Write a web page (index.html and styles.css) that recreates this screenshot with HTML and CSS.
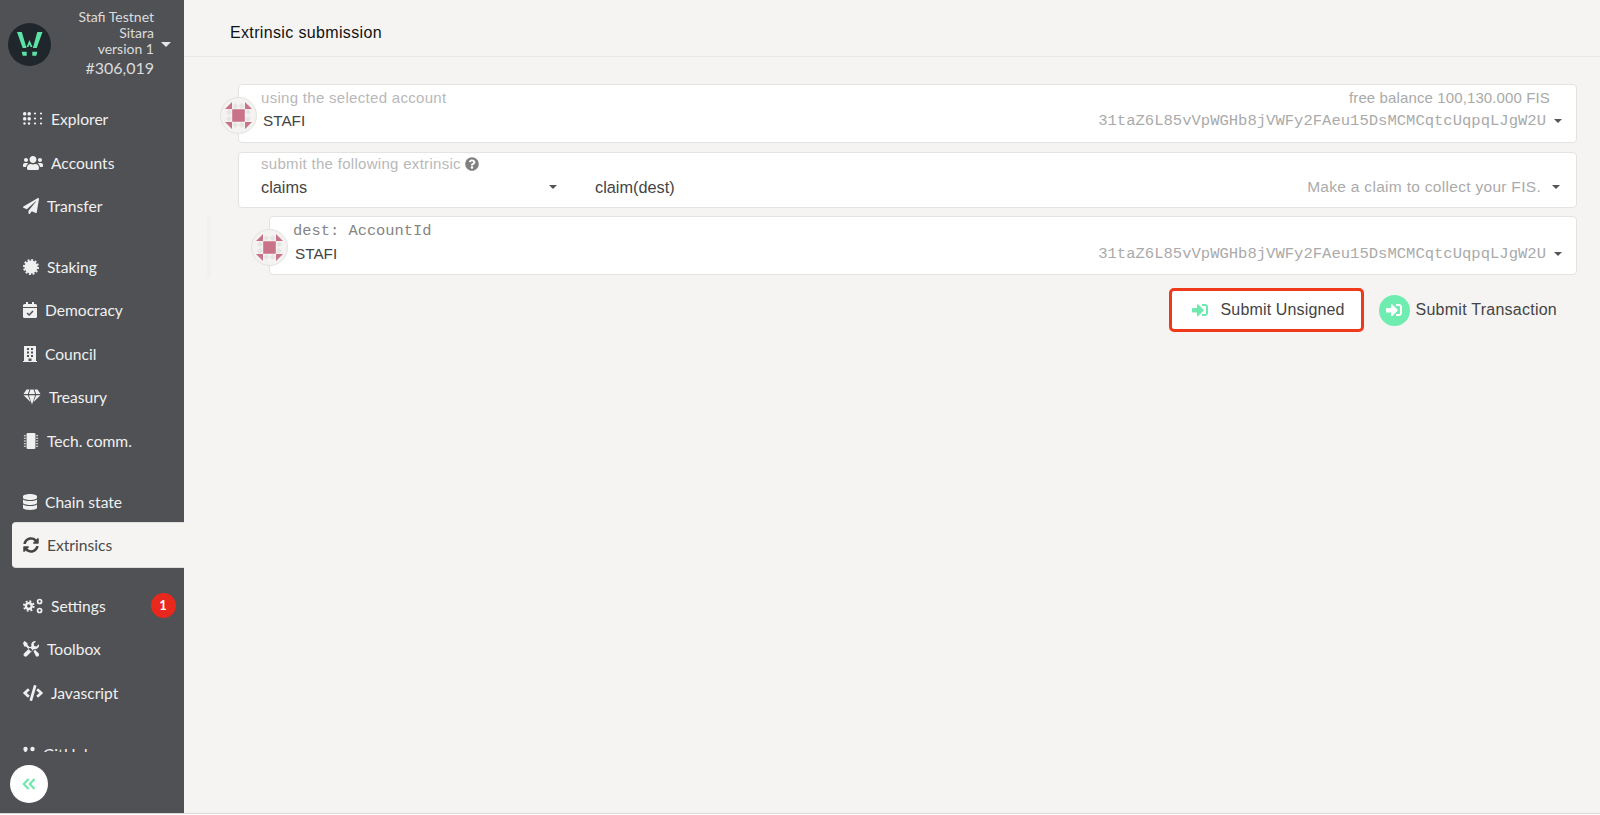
FILE: index.html
```html
<!DOCTYPE html>
<html lang="en">
<head>
<meta charset="utf-8">
<title>Extrinsic submission</title>
<link rel="stylesheet" href="styles.css">
</head>
<body>
<div class="app">
  <aside class="sidebar">
    <header class="chain">
      <svg class="logo" viewBox="0 0 43 43"><circle cx="21.5" cy="21.5" r="21.5" fill="#1f272c"/><path fill="#5de3a5" d="M9 9h4.800l4.700 16h-3.800zM29.300 9h5.200l-5.800 16h-3.800zM13.700 28.700h5v4h-4zM24.300 28.700h5l-1 4h-4zM21.500 17l3 7h-1.900l-1.100-2.500-1.100 2.500h-1.900z"/></svg>
      <div class="chain-info">
        <div>Stafi Testnet</div>
        <div>Sitara</div>
        <div>version 1</div>
        <div class="block">#306,019</div>
      </div>
      <span class="chain-caret"></span>
    </header>
    <nav class="nav">
      <a class="item"><svg class="ic w20" viewBox="0 0 20 14"><g fill="#f0f0f0"><rect x="0" y="0" width="3.400" height="3.400" rx="1.500"/><rect x="4.500" y="0" width="3.400" height="3.400" rx="1.500"/><rect x="0" y="5" width="3.400" height="3.400" rx="1.500"/><rect x="4.500" y="5" width="3.400" height="3.400" rx="1.500"/><circle cx="1.500" cy="11.500" r="1.200"/><circle cx="6" cy="11.500" r="1.200"/><circle cx="12" cy="1.500" r="1.100"/><circle cx="18" cy="1.500" r="1.100"/><circle cx="12" cy="6.500" r="1.100"/><circle cx="18" cy="6.500" r="1.100"/><circle cx="12" cy="11.500" r="1.100"/><circle cx="18" cy="11.500" r="1.100"/></g></svg><span>Explorer</span></a>
      <a class="item"><svg class="ic w20" viewBox="0 0 640 512"><path fill="#f0f0f0" d="M96 224c35.300 0 64-28.700 64-64s-28.700-64-64-64-64 28.700-64 64 28.700 64 64 64zm448 0c35.300 0 64-28.700 64-64s-28.700-64-64-64-64 28.700-64 64 28.700 64 64 64zm32 32h-64c-17.600 0-33.500 7.100-45.100 18.600 40.300 22.100 68.900 62 75.100 109.400h66c17.700 0 32-14.300 32-32v-32c0-35.300-28.700-64-64-64zm-256 0c61.900 0 112-50.100 112-112S381.900 32 320 32 208 82.100 208 144s50.100 112 112 112zm76.800 32h-8.300c-20.800 10-43.900 16-68.500 16s-47.600-6-68.500-16h-8.300C179.600 288 128 339.600 128 403.200V432c0 26.500 21.500 48 48 48h288c26.500 0 48-21.500 48-48v-28.800c0-63.600-51.600-115.200-115.200-115.200zm-223.700-13.400C161.500 263.100 145.600 256 128 256H64c-35.300 0-64 28.700-64 64v32c0 17.700 14.300 32 32 32h65.900c6.300-47.400 34.900-87.300 75.200-109.400z"/></svg><span>Accounts</span></a>
      <a class="item"><svg class="ic w16" viewBox="0 0 512 512"><path fill="#f0f0f0" d="M476 3.200L12.500 270.600c-18.100 10.400-15.800 35.600 2.200 43.200L121 358.400l287.300-253.200c5.500-4.900 13.300 2.600 8.600 8.300L176 407v80.500c0 23.600 28.500 32.900 42.500 15.800L282 426l124.600 52.200c14.200 6 30.400-2.900 33-18.200l72-432C515 7.800 493.300-6.800 476 3.200z"/></svg><span>Transfer</span></a>

      <a class="item gap"><svg class="ic w16" viewBox="0 0 16 16"><circle cx="8" cy="8" r="6.500" fill="#f0f0f0"/><circle cx="8" cy="8" r="7" fill="none" stroke="#f0f0f0" stroke-width="2" stroke-dasharray="2 1.660"/></svg><span>Staking</span></a>
      <a class="item"><svg class="ic w14" viewBox="0 0 14 16"><path fill="#f0f0f0" d="M3 0h2v2h4V0h2v2h1.500A1.500 1.500 0 0 1 14 3.500V5H0V3.500A1.500 1.500 0 0 1 1.500 2H3zM0 6h14v8.500a1.500 1.500 0 0 1-1.500 1.500h-11A1.500 1.500 0 0 1 0 14.500z"/><path fill="none" stroke="#4f5155" stroke-width="1.500" d="M4 11l2.200 2L10 9"/></svg><span>Democracy</span></a>
      <a class="item"><svg class="ic w14" viewBox="0 0 14 16"><path fill="#f0f0f0" d="M1 0h12v15h1v1H0v-1h1z"/><path fill="#4f5155" d="M4 2h2v2H4zM8 2h2v2H8zM4 5.500h2v2H4zM8 5.500h2v2H8zM4 9h2v2H4zM8 9h2v2H8zM5.500 12.500h3V15h-3z"/></svg><span>Council</span></a>
      <a class="item"><svg class="ic w18" viewBox="0 0 18 15"><path fill="#f0f0f0" d="M3.500 0h3L4.800 4.600H.5zM7.500 0h3l1.600 4.600H5.900zM11.500 0h3l3 4.600h-4.300zM.5 5.700h4.300l3 7zM5.900 5.700h6.200L9 15zM13.200 5.700h4.300l-7.300 7z"/></svg><span>Treasury</span></a>
      <a class="item"><svg class="ic w16" viewBox="0 0 16 18"><rect x="3" y="0" width="10" height="18" rx="1.500" fill="#f0f0f0"/><path stroke="#f0f0f0" stroke-width="1.200" d="M0 3h2.200M0 6h2.200M0 9h2.200M0 12h2.200M0 15h2.200M13.800 3H16M13.800 6H16M13.800 9H16M13.800 12H16M13.800 15H16"/></svg><span>Tech. comm.</span></a>

      <a class="item gap"><svg class="ic w14" viewBox="0 0 448 512"><path fill="#f0f0f0" d="M448 73.143v45.714C448 159.143 347.667 192 224 192S0 159.143 0 118.857V73.143C0 32.857 100.333 0 224 0s224 32.857 224 73.143zM448 176v102.857C448 319.143 347.667 352 224 352S0 319.143 0 278.857V176c48.125 33.143 136.208 48.572 224 48.572S399.874 209.143 448 176zm0 160v102.857C448 479.143 347.667 512 224 512S0 479.143 0 438.857V336c48.125 33.143 136.208 48.572 224 48.572S399.874 369.143 448 336z"/></svg><span>Chain state</span></a>
      <a class="item active"><svg class="ic w16" viewBox="0 0 512 512"><path fill="#444" d="M370.720 133.280C339.458 104.008 298.888 87.962 255.848 88c-77.458.068-144.328 53.178-162.791 126.850-1.344 5.363-6.122 9.150-11.651 9.150H24.103c-7.498 0-13.194-6.807-11.807-14.176C33.933 94.924 134.813 8 256 8c66.448 0 126.791 26.136 171.315 68.685L463.030 40.970C478.149 25.851 504 36.559 504 57.941V192c0 13.255-10.745 24-24 24H345.941c-21.382 0-32.090-25.851-16.971-40.971l41.750-41.749zM32 296h134.059c21.382 0 32.090 25.851 16.971 40.971l-41.750 41.750c31.262 29.273 71.835 45.319 114.876 45.280 77.418-.070 144.315-53.144 162.787-126.849 1.344-5.363 6.122-9.150 11.651-9.150h57.304c7.498 0 13.194 6.807 11.807 14.176C478.067 417.076 377.187 504 256 504c-66.448 0-126.791-26.136-171.315-68.685L48.970 471.030C33.851 486.149 8 475.441 8 454.059V320c0-13.255 10.745-24 24-24z"/></svg><span>Extrinsics</span></a>

      <a class="item gap"><svg class="ic w20" viewBox="0 0 20 15"><circle cx="5.800" cy="7.500" r="4.800" fill="none" stroke="#f0f0f0" stroke-width="2" stroke-dasharray="1.900 1.870"/><circle cx="5.800" cy="7.500" r="2.900" fill="none" stroke="#f0f0f0" stroke-width="2.400"/><circle cx="16.600" cy="3" r="2" fill="none" stroke="#f0f0f0" stroke-width="1.700"/><circle cx="16.600" cy="12" r="2" fill="none" stroke="#f0f0f0" stroke-width="1.700"/></svg><span>Settings</span><b class="badge">1</b></a>
      <a class="item"><svg class="ic w16" viewBox="0 0 16 16"><path fill="#f0f0f0" d="M1.500 0L4.500 2.200V4L9.500 9 8 10.500 3 5.500H1.200L0 2zM12 0a3.800 3.800 0 0 0-3.500 5L1 12.500a2 2 0 0 0 2.800 2.800L11 8a3.800 3.800 0 0 0 4.800-4.800L13.500 5.500 11.200 5 10.700 2.700 13 .3A3.800 3.800 0 0 0 12 0zM10.500 10.200L12 8.800l3.500 3.500a1.900 1.900 0 0 1-2.700 2.700z"/></svg><span>Toolbox</span></a>
      <a class="item"><svg class="ic w20" viewBox="0 0 640 512"><path fill="#f0f0f0" d="M278.900 511.500l-61-17.700c-6.400-1.800-10-8.500-8.200-14.900L346.200 8.700c1.800-6.400 8.500-10 14.900-8.200l61 17.700c6.400 1.800 10 8.500 8.200 14.900L293.800 503.300c-1.900 6.400-8.500 10.100-14.900 8.200zm-114-112.200l43.500-46.400c4.600-4.900 4.300-12.700-.8-17.200L117 256l90.600-79.700c5.100-4.500 5.500-12.300.8-17.200l-43.500-46.400c-4.500-4.800-12.100-5.100-17-.5L3.800 247.200c-5.100 4.700-5.100 12.800 0 17.500l144.100 135.100c4.900 4.600 12.500 4.400 17-.5zm327.200.6l144.100-135.100c5.100-4.700 5.100-12.800 0-17.500L492.100 112.100c-4.800-4.500-12.400-4.300-17 .5L431.600 159c-4.600 4.900-4.300 12.700.8 17.200L523 256l-90.600 79.700c-5.100 4.500-5.500 12.300-.8 17.200l43.500 46.400c4.500 4.900 12.100 5.100 17 .6z"/></svg><span>Javascript</span></a>

      <a class="item gap"><svg class="ic w12" viewBox="0 0 12 16"><circle cx="2.500" cy="3" r="2.200" fill="#f0f0f0"/><circle cx="9.500" cy="3" r="2.200" fill="#f0f0f0"/><path stroke="#f0f0f0" stroke-width="2" d="M2.500 5v8"/></svg><span>GitHub</span></a>
    </nav>
    <button class="collapse" type="button"><svg viewBox="0 0 14 12" width="14" height="12"><path fill="none" stroke="#6de9ae" stroke-width="2.200" d="M6.500 1L1.800 6l4.700 5M12.500 1L7.800 6l4.700 5"/></svg></button>
  </aside>

  <main class="main">
    <header class="topbar">Extrinsic submission</header>
    <section class="content">
      <div class="card card-account">
        <svg class="identicon" viewBox="0 0 37 37"><circle cx="18.500" cy="18.500" r="18" fill="#f4f3f2" stroke="#e2e1e0"/><path fill="#e6e5e5" d="M15.300 6l3 3-3 3-3-3zM21.700 6l3 3-3 3-3-3zM15.300 25l3 3-3 3-3-3zM21.700 25l3 3-3 3-3-3zM9 12.300l3 3-3 3-3-3zM9 18.700l3 3-3 3-3-3zM28 12.300l3 3-3 3-3-3zM28 18.700l3 3-3 3-3-3z"/><path fill="#c97389" d="M12.200 12.200h12.600v12.600H12.200zM12 5V12H5zM25 5L32 12H25zM5 25H12v7zM25 25h7L25 32z"/></svg>
        <div class="row">
          <span class="label">using the selected account</span>
          <span class="label balance">free balance 100,130.000 FIS</span>
        </div>
        <div class="row">
          <span class="value name">STAFI</span>
          <span class="select-end"><span class="address">31taZ6L85vVpWGHb8jVWFy2FAeu15DsMCMCqtcUqpqLJgW2U</span><i class="caret"></i></span>
        </div>
      </div>

      <div class="card card-call">
        <div class="row">
          <span class="label">submit the following extrinsic <svg class="help" viewBox="0 0 512 512"><path fill="#808080" d="M504 256c0 136.997-111.043 248-248 248S8 392.997 8 256C8 119.083 119.043 8 256 8s248 111.083 248 248zM262.655 90c-54.497 0-89.255 22.957-116.549 63.758-3.536 5.286-2.353 12.415 2.715 16.258l34.699 26.310c5.205 3.947 12.621 3.008 16.665-2.122 17.864-22.658 30.113-35.797 57.303-35.797 20.429 0 45.698 13.148 45.698 32.958 0 14.976-12.363 22.667-32.534 33.976C247.128 238.528 216 254.941 216 296v4c0 6.627 5.373 12 12 12h56c6.627 0 12-5.373 12-12v-1.333c0-28.462 83.186-29.647 83.186-106.667 0-58.002-60.165-102-116.531-102zM256 338c-25.365 0-46 20.635-46 46 0 25.364 20.635 46 46 46s46-20.636 46-46c0-25.365-20.635-46-46-46z"/></svg></span>
        </div>
        <div class="row call-row">
          <span class="module"><span class="value call">claims</span><i class="caret"></i></span>
          <span class="value call method">claim(dest)</span>
          <span class="select-end"><span class="desc">Make a claim to collect your FIS.</span><i class="caret"></i></span>
        </div>
      </div>

      <div class="param">
        <div class="card card-param">
          <svg class="identicon" viewBox="0 0 37 37"><circle cx="18.500" cy="18.500" r="18" fill="#f4f3f2" stroke="#e2e1e0"/><path fill="#e6e5e5" d="M15.300 6l3 3-3 3-3-3zM21.700 6l3 3-3 3-3-3zM15.300 25l3 3-3 3-3-3zM21.700 25l3 3-3 3-3-3zM9 12.300l3 3-3 3-3-3zM9 18.700l3 3-3 3-3-3zM28 12.300l3 3-3 3-3-3zM28 18.700l3 3-3 3-3-3z"/><path fill="#c97389" d="M12.200 12.200h12.600v12.600H12.200zM12 5V12H5zM25 5L32 12H25zM5 25H12v7zM25 25h7L25 32z"/></svg>
          <div class="row"><span class="label mono">dest: AccountId</span></div>
          <div class="row">
            <span class="value name">STAFI</span>
            <span class="select-end"><span class="address">31taZ6L85vVpWGHb8jVWFy2FAeu15DsMCMCqtcUqpqLJgW2U</span><i class="caret"></i></span>
          </div>
        </div>
      </div>

      <div class="actions">
        <button class="btn btn-unsigned" type="button"><svg class="signin" viewBox="0 0 512 512"><path fill="#6de9ae" d="M416 448h-84c-6.600 0-12-5.400-12-12v-40c0-6.600 5.400-12 12-12h84c17.700 0 32-14.300 32-32V160c0-17.700-14.300-32-32-32h-84c-6.600 0-12-5.400-12-12V76c0-6.600 5.400-12 12-12h84c53 0 96 43 96 96v192c0 53-43 96-96 96zm-47-201L201 79c-15-15-41-4.500-41 17v96H24c-13.300 0-24 10.700-24 24v96c0 13.300 10.700 24 24 24h136v96c0 21.500 26 32 41 17l168-168c9.300-9.400 9.300-24.600 0-34z"/></svg><span>Submit Unsigned</span></button>
        <button class="btn btn-tx" type="button"><span class="tx-icon"><svg class="signin" viewBox="0 0 512 512"><path fill="#fff" d="M416 448h-84c-6.600 0-12-5.400-12-12v-40c0-6.600 5.400-12 12-12h84c17.700 0 32-14.300 32-32V160c0-17.700-14.300-32-32-32h-84c-6.600 0-12-5.400-12-12V76c0-6.600 5.400-12 12-12h84c53 0 96 43 96 96v192c0 53-43 96-96 96zm-47-201L201 79c-15-15-41-4.500-41 17v96H24c-13.300 0-24 10.700-24 24v96c0 13.300 10.700 24 24 24h136v96c0 21.500 26 32 41 17l168-168c9.300-9.400 9.300-24.600 0-34z"/></svg></span><span>Submit Transaction</span></button>
      </div>
    </section>
  </main>
</div>
</body>
</html>
```

FILE: styles.css
```css
* { box-sizing: border-box; }
html, body { margin: 0; height: 100%; overflow: hidden; background: #fff; }
body { font-family: "Liberation Sans", Arial, sans-serif; color: #4a4a4a; }

.app { display: flex; height: 814px; border-bottom: 1px solid #d9d9d9; }

/* sidebar */
.sidebar { position: relative; flex: 0 0 183.500px; background: #4f5155; font-family: Lato, sans-serif; color: #f0f0f0; }
.chain { display: flex; align-items: center; height: 97.500px; padding: 0 0 8px 8px; }
.logo { width: 43px; height: 43px; flex: none; }
.chain-info { flex: 0 0 103px; text-align: right; font-size: 14px; line-height: 15.800px; color: #dcdcdc; }
.block { font-size: 16px; line-height: 24px; }
.chain-caret { width: 0; height: 0; margin: 0 0 0 7px; border: 5px solid transparent; border-top: 5px solid #e6e6e6; border-bottom: 0; }

.nav { height: 654.500px; overflow: hidden; margin-left: 12px; }
.item { position: relative; display: flex; align-items: center; gap: 8px; height: 43.400px; padding-left: 11px; font-size: 15.600px; color: #f0f0f0; }
.item.gap { margin-top: 17.600px; }
.item.active { background: #f5f4f3; color: #4a4a4a; border-radius: 4px 0 0 4px; box-shadow: 0 -1px 0 #e0e0e0, 0 1px 0 #ddd; }
.ic { flex: none; height: 16px; }
.w12 { width: 12px; }
.w14 { width: 14px; }
.w16 { width: 16px; }
.w18 { width: 18px; }
.w20 { width: 20px; }
.badge { position: absolute; right: 8px; top: 9px; width: 25px; height: 25px; border-radius: 50%; background: #e8281c; color: #fff; font-size: 13px; font-weight: 700; line-height: 25px; text-align: center; }

.collapse { position: absolute; left: 10px; bottom: 10px; display: flex; align-items: center; justify-content: center; width: 38px; height: 38px; padding: 0; border: 0; border-radius: 50%; background: #fff; }

/* main */
.main { flex: 1; min-width: 0; background: #f5f4f3; }
.topbar { height: 57px; padding: 24px 0 0 46.500px; border-bottom: 1px solid #e9e8e6; font-size: 16px; line-height: 18px; color: #111; letter-spacing: 0.350px; }
.content { padding: 27px 23px 0 54.500px; }

.card { position: relative; background: #fff; border: 1px solid #e4e3e1; border-radius: 4px; }
.card-account { height: 59px; padding: 3px 26px 0 22px; }
.card-call { height: 56px; margin-top: 9px; padding: 1px 16px 0 22px; }
.card-param { height: 59px; padding: 4px 14px 0 23px; }
.card-account .select-end { margin-right: -12px; }

.identicon { position: absolute; left: -19px; top: 12px; width: 37px; height: 37px; }
.row { display: flex; align-items: center; justify-content: space-between; }
.label { font-size: 15px; line-height: 20px; color: #b8b8b8; letter-spacing: 0.300px; }
.balance { color: #aaa; letter-spacing: 0.120px; }
.mono { font-family: "Liberation Mono", monospace; font-size: 15.400px; letter-spacing: 0; color: #858585; }
.help { width: 14px; height: 14px; vertical-align: -2px; }
.value { font-size: 15.300px; line-height: 26px; color: #444; }
.call { font-size: 16.300px; }
.name { margin-left: 2px; }
.select-end { display: flex; align-items: center; gap: 8px; margin-left: auto; }
.address { font-family: "Liberation Mono", monospace; font-size: 15.550px; line-height: 24px; color: #aaa; }
.desc { margin-right: 3px; font-size: 15.500px; line-height: 26px; color: #ababab; letter-spacing: 0.300px; }
.caret { flex: none; width: 0; height: 0; border: 4px solid transparent; border-top: 4px solid #555; border-bottom: 0; }
.call-row { justify-content: flex-start; }
.module { display: flex; align-items: center; justify-content: space-between; width: 296px; }
.method { margin-left: 38px; }

.param { margin: 8px 0 0 -31px; padding: 0 0 3px 58px; border-left: 4px solid #f2f1ef; }

.actions { display: flex; align-items: center; justify-content: flex-end; gap: 15px; margin-top: 10px; padding-right: 20px; }
.btn { display: flex; align-items: center; padding: 0; border: 0; background: none; font: inherit; font-size: 16px; color: #444; }
.btn-unsigned { gap: 13px; width: 195px; height: 44px; padding-left: 20px; background: #fff; border: 3px solid #ee3a1b; border-radius: 5px; letter-spacing: 0.150px; }
.btn-tx { gap: 6px; letter-spacing: 0.250px; }
.signin { width: 16px; height: 16px; flex: none; }
.tx-icon { display: flex; align-items: center; justify-content: center; width: 31px; height: 31px; border-radius: 50%; background: #6fedb0; }
```
